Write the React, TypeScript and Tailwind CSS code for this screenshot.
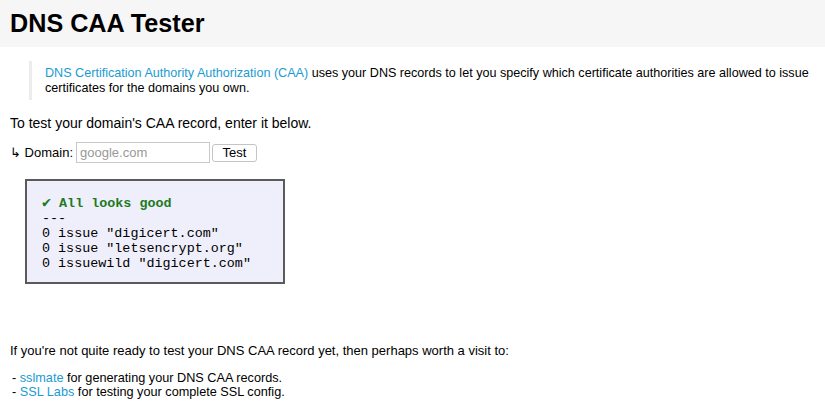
import React from "react";

export default function App() {
  return (
    <div className="w-[825px] h-[416px] bg-white text-black font-['Liberation_Sans',Arial,sans-serif] overflow-hidden">
      <div className="h-[47px] bg-[#f6f6f6] pl-[10px] flex items-center">
        <h1 className="text-[25.2px] font-bold leading-none mt-[1px]">DNS CAA Tester</h1>
      </div>
      <div className="ml-[29px] mt-[14px] border-l-[3px] border-[#ececec] pl-[13px] pt-[5px] pb-[4px] text-[12.6px] leading-[15px] w-[790px]">
        <a className="text-[#1a9bd3]">DNS Certification Authority Authorization (CAA)</a> uses your DNS records to let you specify which certificate authorities are allowed to issue certificates for the domains you own.
      </div>
      <p className="ml-[10px] mt-[15px] text-[14px] leading-[16px]">To test your domain's CAA record, enter it below.</p>
      <div className="ml-[10px] mt-[11px] flex items-center text-[13px]">
        <span>↳ Domain:</span>
        <input
          className="ml-[3px] w-[134px] h-[21px] border border-[#c8c8c8] px-[3px] text-[13px] placeholder:text-[#999] outline-none"
          placeholder="google.com"
        />
        <button className="ml-[2px] w-[45px] h-[18px] border border-[#c4c4c4] rounded-[3px] bg-white text-[13px] leading-none flex items-center justify-center">
          Test
        </button>
      </div>
      <pre className="ml-[25px] mt-[16px] w-[260px] h-[105px] border-[2px] border-[#5a5a5a] bg-[#efeffb] pl-[15px] pt-[15px] font-['Liberation_Mono',monospace] text-[13.4px] leading-[15px]">
        <span className="text-[#1e7a1e] font-bold"><span className="text-[15px]">✔</span> All looks good</span>
        {"\n---\n0 issue \"digicert.com\"\n0 issue \"letsencrypt.org\"\n0 issuewild \"digicert.com\""}
      </pre>
      <p className="ml-[10px] mt-[59px] text-[13px] leading-[15px]">If you're not quite ready to test your DNS CAA record yet, then perhaps worth a visit to:</p>
      <div className="ml-[12px] mt-[13px] text-[12.7px] leading-[14px]">
        <div>- <a className="text-[#1a9bd3]">sslmate</a> for generating your DNS CAA records.</div>
        <div>- <a className="text-[#1a9bd3]">SSL Labs</a> for testing your complete SSL config.</div>
      </div>
    </div>
  );
}
